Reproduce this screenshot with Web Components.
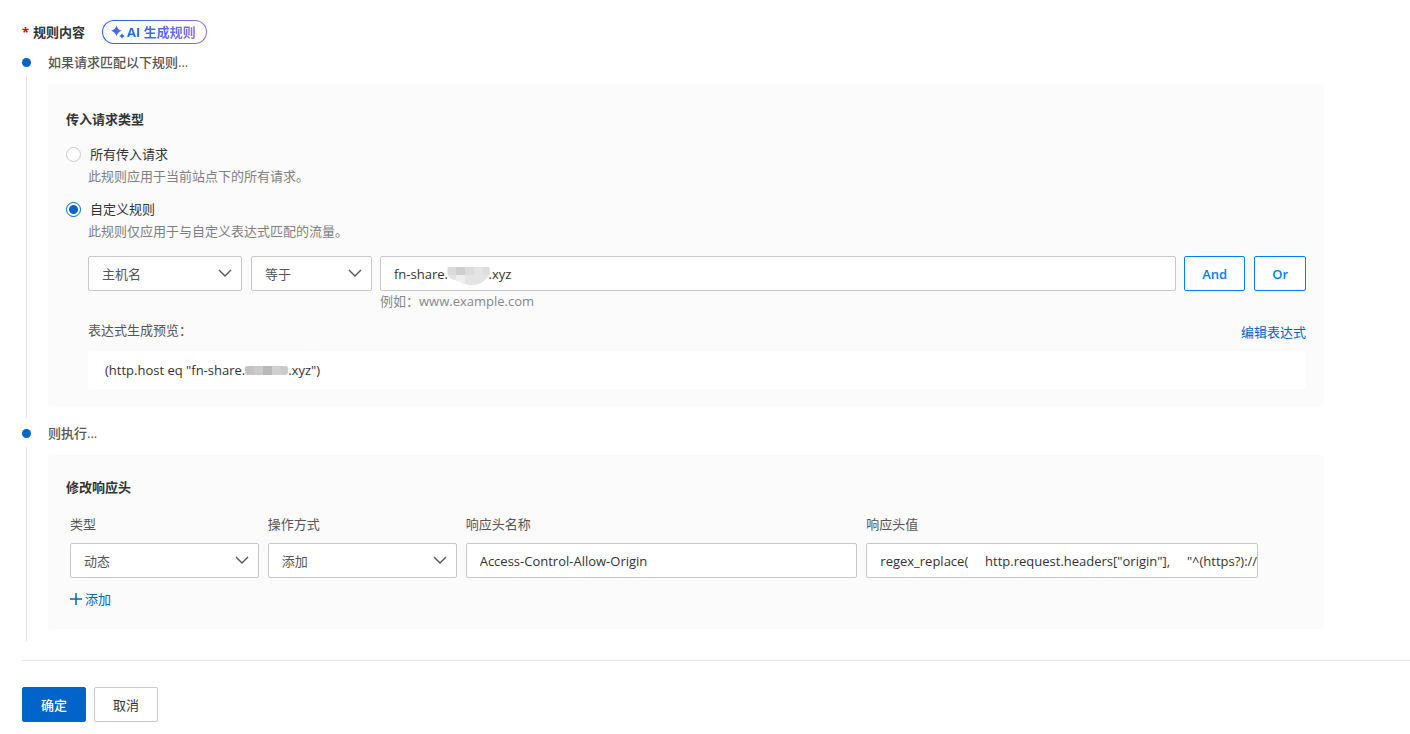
<!DOCTYPE html>
<html lang="zh-CN">
<head>
<meta charset="utf-8">
<title>规则内容</title>
<style>
  body {
    margin: 0;
    background: #fff;
    color: #333;
    font: 13px/20px "Open Sans", "Noto Sans CJK SC", sans-serif;
    --blue: #0064c8;
    --line: #c8c8c8;
    --panel: #fbfbfb;
  }
</style>
</head>
<body>
<rule-editor></rule-editor>

<template id="t-editor">
  <style>
    :host { display: block; padding: 20px 0 12px 22px; }
    header { display: flex; align-items: center; gap: 17px; margin-bottom: 7px; font-weight: 700; }
    .req { color: #e00000; margin-right: 4px; }
    main { margin-right: 86px; }
    footer { display: flex; gap: 8px; margin-top: 15px; padding-top: 26px; border-top: 1px solid #e5e5e5; }
  </style>
  <header><div><span class="req">*</span>规则内容</div><ai-button>AI 生成规则</ai-button></header>
  <main>
    <rule-step><span slot="title">如果请求匹配以下规则...</span><match-panel></match-panel></rule-step>
    <rule-step><span slot="title">则执行...</span><action-panel></action-panel></rule-step>
  </main>
  <footer><ui-button kind="primary">确定</ui-button><ui-button>取消</ui-button></footer>
</template>

<template id="t-ai">
  <style>
    :host { display: block; }
    button {
      display: flex; align-items: center; gap: 2px; height: 24px; box-sizing: border-box;
      padding: 0 10px 0 8px; border: 1px solid transparent; border-radius: 12px; font: inherit; cursor: pointer;
      background: linear-gradient(#fff, #fff) padding-box, linear-gradient(90deg, #1366ec, #8c6cf5) border-box;
    }
    .t { color: transparent; background: linear-gradient(90deg, #1366ff, #8c6cf5); -webkit-background-clip: text; background-clip: text; }
    svg { display: block; }
  </style>
  <button type="button">
    <svg width="14" height="14" viewBox="0 0 14 14" aria-hidden="true">
      <defs><linearGradient id="g"><stop stop-color="#1366ff"/><stop offset="1" stop-color="#7a6cf5"/></linearGradient></defs>
      <path fill="url(#g)" d="M5.500 .5Q6.800 4.700 10.800 5.800Q6.800 6.900 5.500 11.200Q4.200 6.900 .2 5.800Q4.200 4.700 5.500 .5Z"/>
      <path fill="#2e6bff" d="M11 8.200Q11.700 10.300 13.800 11Q11.700 11.700 11 13.800Q10.300 11.700 8.200 11Q10.300 10.300 11 8.200Z"/>
    </svg>
    <span class="t"><slot></slot></span>
  </button>
</template>

<template id="t-step">
  <style>
    :host { display: grid; grid-template-columns: 9px 1fr; column-gap: 17px; grid-template-rows: 22px 1fr; row-gap: 3px; }
    .dot { width: 9px; height: 9px; border-radius: 50%; background: var(--blue); align-self: center; }
    .title { line-height: 22px; color: #555; font-weight: 500; }
    .rail { width: 1px; background: #e5e5e5; justify-self: center; margin-bottom: 4px; }
    .body { padding: 8px 0 16px; min-width: 0; }
  </style>
  <div class="dot"></div><div class="title"><slot name="title"></slot></div>
  <div class="rail"></div><div class="body"><slot></slot></div>
</template>

<template id="t-match">
  <style>
    :host { display: block; background: var(--panel); border-radius: 4px; padding: 25px 18px 17px; }
    h3 { margin: 0 0 15px; font-size: 13px; line-height: 20px; }
    label { display: flex; align-items: center; gap: 9px; }
    input { appearance: none; width: 15px; height: 15px; box-sizing: border-box; margin: 0; border: 1px solid var(--line); border-radius: 50%; background: #fff; }
    input:checked { border-color: var(--blue); background: radial-gradient(circle, var(--blue) 4px, #fff 5px); }
    .desc { margin: 2px 0 13px 22px; color: #808080; }
    .rule { margin: 15px 0 0 22px; }
    .row { display: grid; grid-template-columns: auto minmax(0, 1fr) auto; column-gap: 8px; }
    .set { display: flex; gap: 9px; }
    .host { width: 154px; } .op { width: 121px; }
    .hint { grid-column: 2; color: #888; }
    .bar { display: flex; justify-content: space-between; margin: 9px 0 7px; color: #555; }
    a { line-height: 24px; color: var(--blue); text-decoration: none; }
    .code { display: flex; align-items: center; height: 38px; padding-left: 17px; background: #fff; border-radius: 3px; }
    .over { position: relative; }
    .over mask-blur { position: absolute; left: 67px; top: 10px; }
  </style>
  <h3>传入请求类型</h3>
  <label><input type="radio" name="scope">所有传入请求</label>
  <div class="desc">此规则应用于当前站点下的所有请求。</div>
  <label><input type="radio" name="scope" checked>自定义规则</label>
  <div class="desc">此规则仅应用于与自定义表达式匹配的流量。</div>
  <div class="rule">
    <div class="row">
      <div class="set"><ui-select class="host" name="匹配字段" value="主机名"></ui-select><ui-select class="op" name="运算符" value="等于"></ui-select></div>
      <div class="over"><ui-input name="匹配值" value="fn-share.            .xyz"></ui-input><mask-blur round></mask-blur></div>
      <div class="set"><ui-button kind="outline">And</ui-button><ui-button kind="outline">Or</ui-button></div>
      <div class="hint">例如：www.example.com</div>
    </div>
    <div class="bar"><span>表达式生成预览：</span><a href="#edit">编辑表达式</a></div>
    <div class="code"><span>(http.host eq "fn-share.</span><mask-blur></mask-blur><span>.xyz")</span></div>
  </div>
</template>

<template id="t-action">
  <style>
    :host { display: block; background: var(--panel); border-radius: 4px; padding: 22px 66px 20px 18px; }
    h3 { margin: 0 0 17px; font-size: 13px; line-height: 20px; }
    .fields { display: grid; grid-template-columns: 189fr 189fr 392fr 392fr; gap: 9px; margin-left: 4px; }
    a { display: flex; width: max-content; align-items: center; gap: 3px; margin: 11px 0 0 4px; color: var(--blue); text-decoration: none; }
  </style>
  <h3>修改响应头</h3>
  <div class="fields">
    <ui-select label="类型" value="动态"></ui-select>
    <ui-select label="操作方式" value="添加"></ui-select>
    <ui-input label="响应头名称" value="Access-Control-Allow-Origin"></ui-input>
    <ui-input label="响应头值" value='regex_replace(     http.request.headers["origin"],     "^(https?)://'></ui-input>
  </div>
  <a href="#add"><svg width="12" height="12" viewBox="0 0 12 12" aria-hidden="true"><path d="M6 0v12M0 6h12" stroke="currentColor" stroke-width="1.500"/></svg>添加</a>
</template>

<template id="t-select">
  <style>
    :host { display: block; min-width: 0; }
    label { display: block; color: #555; margin-bottom: 9px; }
    label:empty { display: none; }
    .box { position: relative; }
    select { appearance: none; display: block; width: 100%; height: 35px; box-sizing: border-box; padding: 0 30px 0 13px; border: 1px solid var(--line); border-radius: 2px; background: #fff; color: #555; font: inherit; }
    svg { position: absolute; right: 10px; top: 13px; pointer-events: none; }
  </style>
  <label for="c"></label>
  <div class="box"><select id="c"><option></option></select>
    <svg width="14" height="9" viewBox="0 0 14 9" aria-hidden="true"><path d="M1 1l6 6 6-6" fill="none" stroke="#555" stroke-width="1.400"/></svg></div>
</template>

<template id="t-input">
  <style>
    :host { display: block; min-width: 0; }
    label { display: block; color: #555; margin-bottom: 9px; }
    label:empty { display: none; }
    input { display: block; width: 100%; height: 35px; box-sizing: border-box; padding: 0 0 0 13px; border: 1px solid var(--line); border-radius: 2px; background: #fff; color: #333; font: inherit; }
  </style>
  <label for="c"></label><input id="c" type="text">
</template>

<template id="t-button">
  <style>
    :host { display: block; }
    button { height: 35px; box-sizing: border-box; padding: 0 18px; border: 1px solid var(--line); border-radius: 2px; background: #fff; color: #333; font: inherit; cursor: pointer; }
    :host([kind="primary"]) button { background: var(--blue); border-color: var(--blue); color: #fff; font-weight: 500; }
    :host([kind="outline"]) button { padding: 0 17px; border-color: #0080ff; color: #0080ff; font-weight: 600; }
  </style>
  <button type="button"><slot></slot></button>
</template>

<template id="t-mask">
  <style>
    :host { display: block; pointer-events: none; }
    svg { display: block; }
    .r { display: none; }
    :host([round]) .r { display: block; }
    :host([round]) .f { display: none; }
  </style>
  <svg class="r" width="43" height="20" viewBox="0 0 43 20" aria-hidden="true">
    <clipPath id="k"><path d="M1 1h41q1 3 1 6q-1 4-5 7q-5 5-13 5q-9 0-13-4q-8-1-11-5q-1-5 0-9z"/></clipPath>
    <g clip-path="url(#k)"><path fill="#e4e4e4" d="M0 0h43v20H0z"/><path fill="#dadada" d="M0 0h9v9H0z"/><path fill="#d0cecd" d="M9 0h9v9H9z"/><path fill="#d9dcdf" d="M18 0h9v9h-9z"/><path fill="#eeeeee" d="M9 9h9v11H9z"/><path fill="#dedede" d="M36 0h7v9h-7z"/></g>
  </svg>
  <svg class="f" width="43" height="9" viewBox="0 0 43 9" aria-hidden="true">
    <clipPath id="m"><rect width="43" height="9" rx="3"/></clipPath>
    <g clip-path="url(#m)"><path fill="#cbcbcb" d="M0 0h43v9H0z"/><path fill="#b9b9bb" d="M18 0h9v9h-9z"/><path fill="#d0d0d2" d="M27 0h9v9h-9z"/><path fill="#c3c3c3" d="M0 0h9v9H0z"/></g>
  </svg>
</template>

<script>
  class Base extends HTMLElement {
    constructor() {
      super();
      this.attachShadow({ mode: "open" }).append(
        document.getElementById(this.constructor.template).content.cloneNode(true));
    }
  }
  class Field extends Base {
    connectedCallback() {
      const control = this.shadowRoot.getElementById("c");
      this.shadowRoot.querySelector("label").textContent = this.getAttribute("label") || "";
      if (this.hasAttribute("name")) control.setAttribute("aria-label", this.getAttribute("name"));
      this.fill(control, this.getAttribute("value"));
    }
  }
  class UiSelect extends Field {
    static template = "t-select";
    fill(control, value) { control.options[0].textContent = value; }
  }
  class UiInput extends Field {
    static template = "t-input";
    fill(control, value) { control.value = value; }
  }
  customElements.define("ui-select", UiSelect);
  customElements.define("ui-input", UiInput);
  customElements.define("ui-button", class extends Base { static template = "t-button"; });
  customElements.define("mask-blur", class extends Base { static template = "t-mask"; });
  customElements.define("ai-button", class extends Base { static template = "t-ai"; });
  customElements.define("rule-step", class extends Base { static template = "t-step"; });
  customElements.define("match-panel", class extends Base { static template = "t-match"; });
  customElements.define("action-panel", class extends Base { static template = "t-action"; });
  customElements.define("rule-editor", class extends Base { static template = "t-editor"; });
</script>
</body>
</html>
